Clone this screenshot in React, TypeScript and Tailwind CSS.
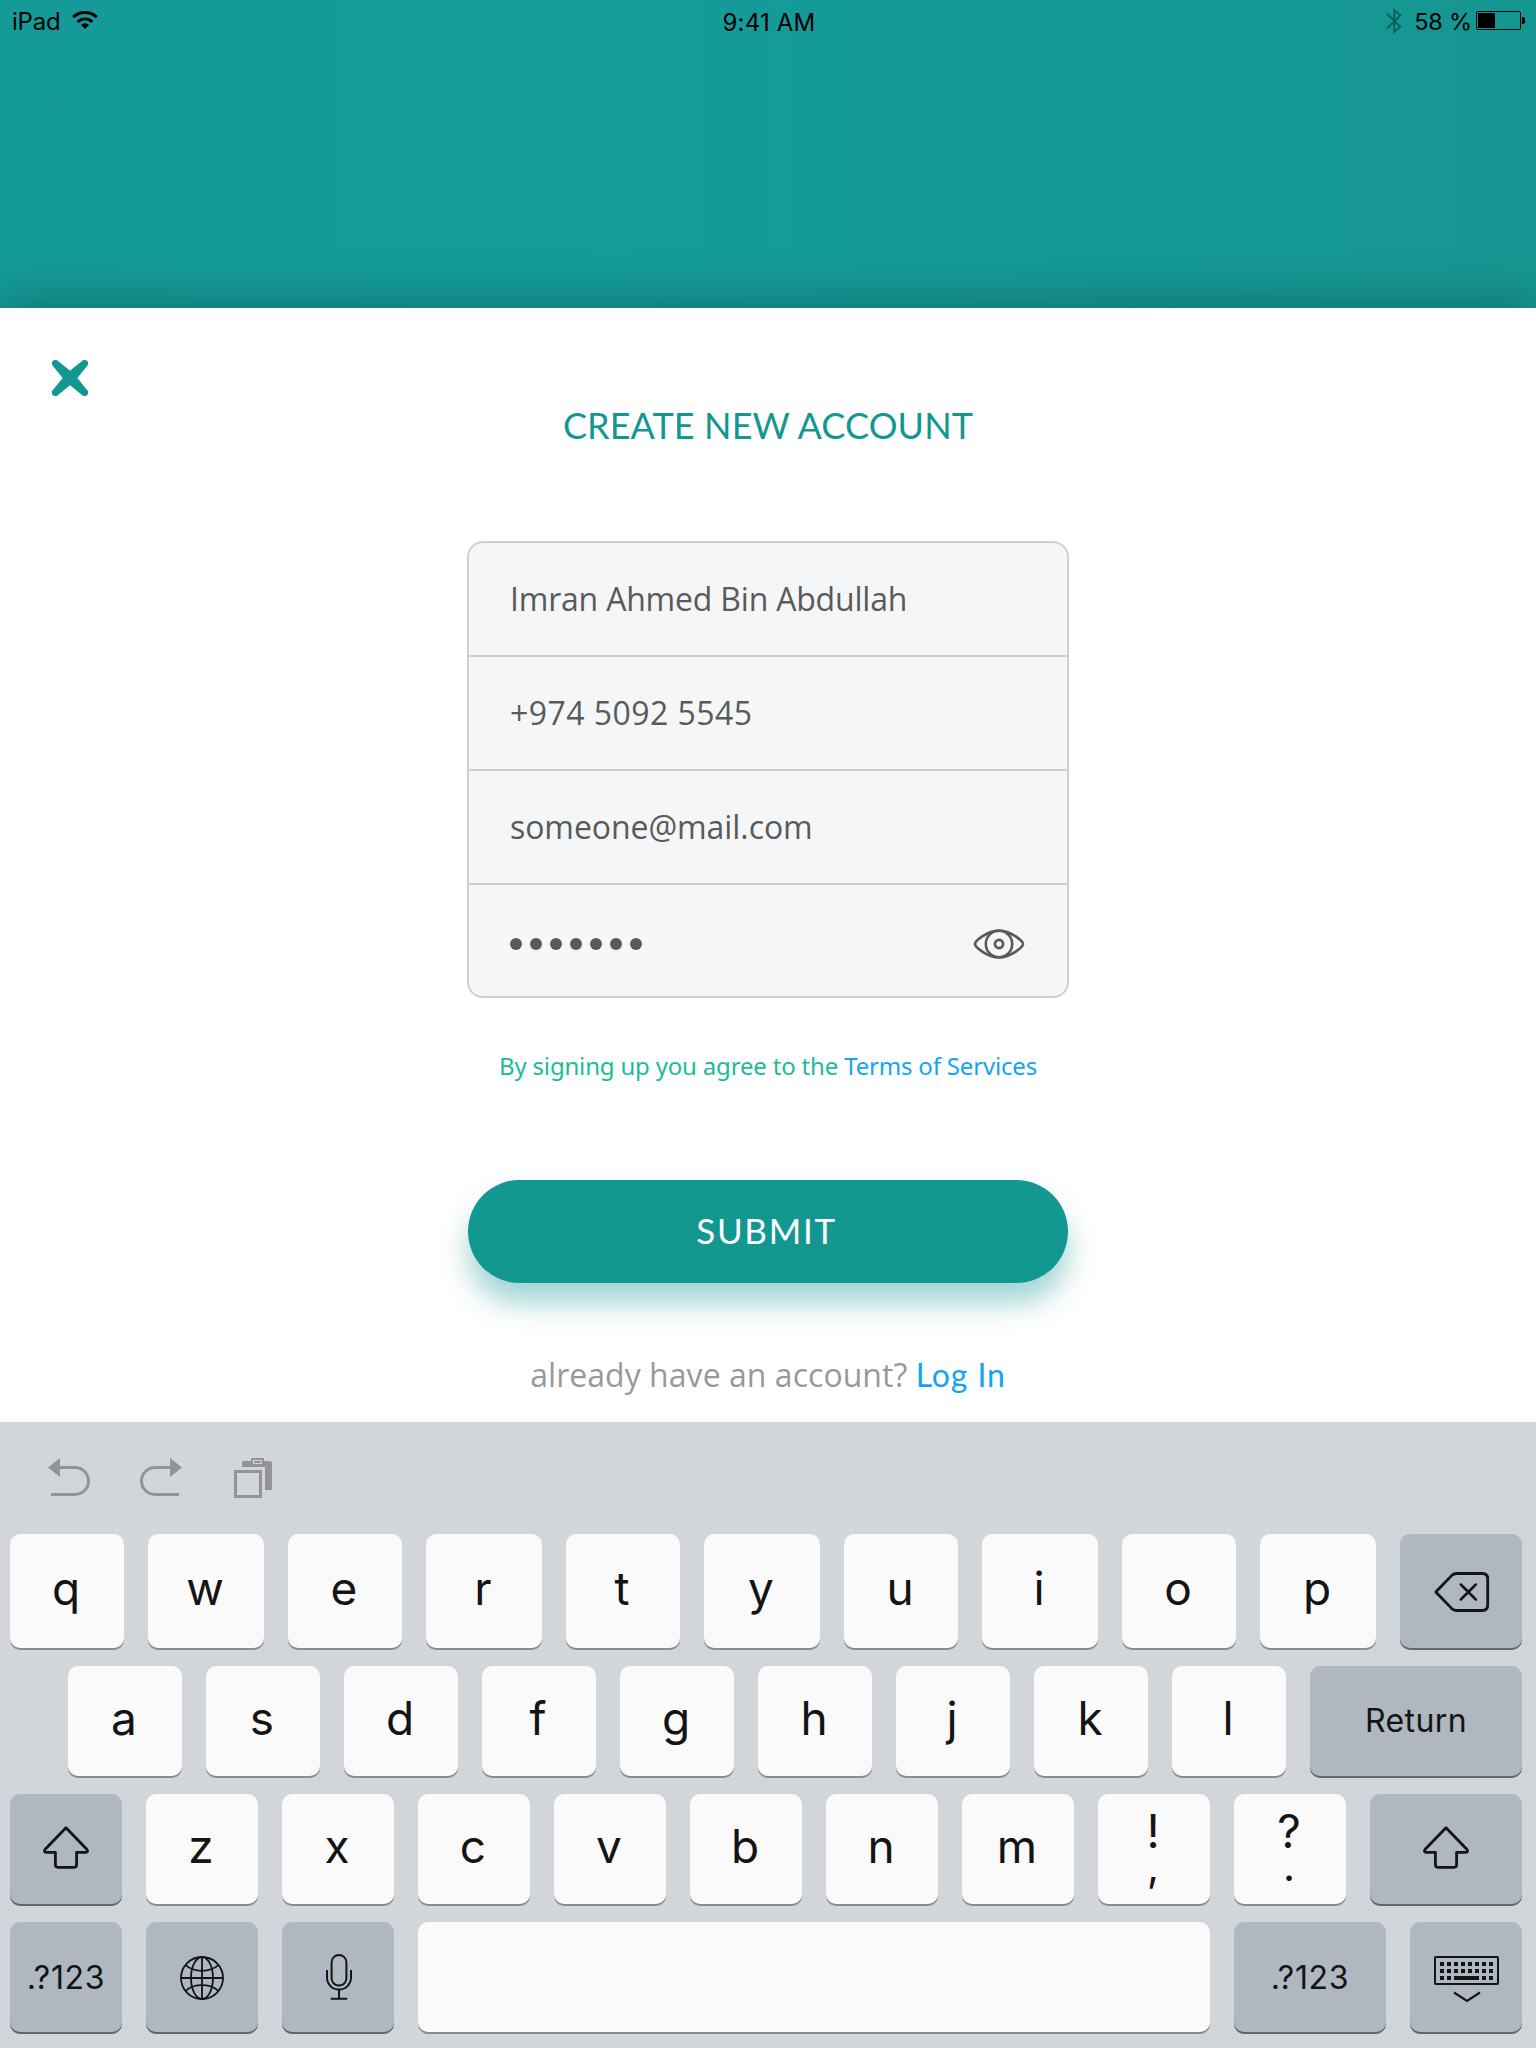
import type { ReactNode } from "react";

function WifiIcon() {
  return (
    <svg width="26" height="18" viewBox="0 0 26 18" className="block">
      <path d="M1.2 6.2 A17 17 0 0 1 24.8 6.2" fill="none" stroke="#000" strokeWidth="3" />
      <path d="M5.6 10.9 A10.6 10.6 0 0 1 20.4 10.9" fill="none" stroke="#000" strokeWidth="2.8" />
      <path d="M13 18 L8.9 13.9 A5.8 5.8 0 0 1 17.1 13.9 Z" fill="#000" />
    </svg>
  );
}

function BluetoothIcon() {
  return (
    <svg width="16" height="26" viewBox="0 0 16 26" className="block">
      <path
        d="M1 5.5 L14.3 18.8 L8.3 24 V2 L14.3 7.2 L1 20.5"
        fill="none"
        stroke="#0c5f5d"
        strokeWidth="1.9"
      />
    </svg>
  );
}

function BatteryIcon() {
  return (
    <div className="flex items-center">
      <div className="h-[19px] w-[45px] rounded-[2px] border border-black p-px">
        <div className="h-full w-[17px] bg-black" />
      </div>
      <div className="ml-px h-[7px] w-[3px] rounded-r-[2px] bg-black" />
    </div>
  );
}

function BackArrow() {
  return (
    <svg width="32" height="32" viewBox="0 0 32 32" className="block opacity-60">
      <path
        d="M17 3 L4 16 L17 29 M4 16 H28"
        fill="none"
        stroke="#149792"
        strokeWidth="6.5"
        strokeLinecap="round"
        strokeLinejoin="round"
      />
    </svg>
  );
}

function CloseIcon() {
  return (
    <svg width="36" height="36" viewBox="0 0 36 36" className="block">
      <path
        d="M18 10.7 L30 .9 A3.6 3.6 0 0 1 35.1 6 L25.4 18 L35.1 30 A3.6 3.6 0 0 1 30 35.1 L18 25.3 L6 35.1 A3.6 3.6 0 0 1 .9 30 L10.7 18 L.9 6 A3.6 3.6 0 0 1 6 .9 Z"
        fill="#139791"
      />
    </svg>
  );
}

function EyeIcon() {
  return (
    <svg width="52" height="30" viewBox="0 0 52 30" className="block" fill="none" stroke="#5a5a5a">
      <path
        d="M1.9 15 C1.9 12.6 13.5 1.6 26 1.6 C38.5 1.6 50.1 12.6 50.1 15 C50.1 17.4 38.5 28.4 26 28.4 C13.5 28.4 1.9 17.4 1.9 15 Z"
        strokeWidth="2.6"
      />
      <circle cx="26" cy="15" r="13.2" strokeWidth="2.6" />
      <circle cx="26" cy="15" r="4.1" strokeWidth="2.7" />
    </svg>
  );
}

function UndoIcon({ flipped = false }: { flipped?: boolean }) {
  return (
    <svg width="42" height="38" viewBox="0 0 42 38" className={flipped ? "block -scale-x-100" : "block"}>
      <path d="M0 9.5 L12 0 V19 Z" fill="#939498" />
      <path d="M11 9.5 H27 A13.5 13.5 0 0 1 27 36.5 H3" fill="none" stroke="#939498" strokeWidth="3" />
    </svg>
  );
}

function PasteIcon() {
  return (
    <svg width="38" height="40" viewBox="0 0 38 40" className="block">
      <path d="M8 9 V4.5 Q8 3 9.5 3 H36 Q38 3 38 5 V30.5 Q38 32 36.5 32 H31 V9 Z" fill="#939498" />
      <rect x="17" y="0" width="13" height="8" fill="#939498" />
      <rect x="19.5" y="2.5" width="8" height="3" fill="none" stroke="#d2d5da" strokeWidth="1" />
      <rect x="1.5" y="13.5" width="25" height="25" fill="none" stroke="#939498" strokeWidth="3" />
    </svg>
  );
}

function DeleteIcon() {
  return (
    <svg
      width="56"
      height="40"
      viewBox="0 0 56 40"
      className="block"
      fill="none"
      stroke="#141414"
      strokeWidth="2.8"
      strokeLinejoin="round"
      strokeLinecap="round"
    >
      <path d="M1.8 20 L17.6 3.6 Q19.8 1.5 22.5 1.5 H48.5 Q53.7 1.5 53.7 6.7 V33.3 Q53.7 38.5 48.5 38.5 H22.5 Q19.8 38.5 17.6 36.4 Z" />
      <path d="M26.8 12.5 L41.8 27.5 M41.8 12.5 L26.8 27.5" strokeWidth="2.5" />
    </svg>
  );
}

function ShiftIcon() {
  return (
    <svg width="46" height="43" viewBox="0 0 46 43" className="block">
      <path
        d="M23 1.7 L2.2 23.2 Q.3 26.3 3.2 26.3 H12.4 V38.4 Q12.4 41.4 15.4 41.4 H30.6 Q33.6 41.4 33.6 38.4 V26.3 H42.8 Q45.7 26.3 43.8 23.2 Z"
        fill="none"
        stroke="#141414"
        strokeWidth="2.8"
        strokeLinejoin="round"
      />
    </svg>
  );
}

function GlobeIcon() {
  return (
    <svg width="44" height="44" viewBox="0 0 44 44" className="block" fill="none" stroke="#141414" strokeWidth="1.8">
      <circle cx="22" cy="22" r="21" />
      <ellipse cx="22" cy="22" rx="11" ry="21" />
      <path d="M22 1 V43 M1 22 H43" />
      <path d="M5.7 9.2 Q12 14.8 22 14.8 Q32 14.8 38.3 9.2" />
      <path d="M5.7 34.8 Q12 29.2 22 29.2 Q32 29.2 38.3 34.8" />
    </svg>
  );
}

function MicIcon() {
  return (
    <svg width="26" height="46" viewBox="0 0 26 46" className="block" fill="none" stroke="#141414" strokeWidth="2">
      <rect x="5.6" y="1" width="14.8" height="30.6" rx="7.4" />
      <path d="M1 16 V23.6 A12 12 0 0 0 25 23.6 V16" />
      <path d="M13 35.8 V44.8 M4.8 44.8 H21.2" />
    </svg>
  );
}

const KEY_COLUMNS = [6, 13, 20, 27, 34, 41, 48, 55];

function HideKeyboardIcon() {
  return (
    <svg width="65" height="47" viewBox="0 0 65 47" className="block" fill="#141414">
      <rect x="1" y="1" width="63" height="27" rx="1" fill="none" stroke="#141414" strokeWidth="2" />
      {KEY_COLUMNS.map((x) => (
        <g key={x}>
          <rect x={x} y="6" width="4" height="4" />
          <rect x={x} y="13" width="4" height="4" />
        </g>
      ))}
      {[6, 13, 48, 55].map((x) => (
        <rect key={x} x={x} y="20" width="4" height="4" />
      ))}
      <rect x="20" y="20" width="25" height="4" />
      <path d="M20 36.5 L33 45 L46 36.5" fill="none" stroke="#141414" strokeWidth="2.2" />
    </svg>
  );
}

function Key({ width, dark = false, children }: { width: string; dark?: boolean; children?: ReactNode }) {
  const tone = dark
    ? "bg-[#afb7c1] shadow-[0_2px_0_#62676d]"
    : "bg-[#fafafa] shadow-[0_2px_0_#8a8b8d]";
  return (
    <button className={`flex h-full shrink-0 items-center justify-center rounded-[10px] ${tone} ${width}`}>
      {children}
    </button>
  );
}

function Letter({ children }: { children: string }) {
  return <span className="pr-[2px] pb-[7px] text-[46px] leading-none">{children}</span>;
}

function StackedKey({ top, bottom }: { top: string; bottom: string }) {
  return (
    <Key width="w-[112px]">
      <span className="flex flex-col items-center pr-[2px] pb-[2px] text-[46px] leading-[32px]">
        <span>{top}</span>
        <span className="pt-[3px] text-[42px]">{bottom}</span>
      </span>
    </Key>
  );
}

function NumbersLabel() {
  return <span className="pt-[2px] text-[32px] leading-none tracking-[0.7px]">.?123</span>;
}

function Keyboard() {
  return (
    <section className="h-[626px] bg-[#d2d5da] font-['Inter',sans-serif] text-[#141414]">
      <div className="flex h-[112px] items-start pt-9 pl-12">
        <UndoIcon />
        <div className="ml-[50px]">
          <UndoIcon flipped />
        </div>
        <div className="ml-[52px]">
          <PasteIcon />
        </div>
      </div>

      <div className="flex h-[114px] gap-6 pl-[10px]">
        {"qwertyuiop".split("").map((c, i) => (
          <Key key={c} width={i % 2 === 0 ? "w-[114px]" : "w-[116px]"}>
            <Letter>{c}</Letter>
          </Key>
        ))}
        <Key width="w-[122px]" dark>
          <span className="pt-[2px] pl-px">
            <DeleteIcon />
          </span>
        </Key>
      </div>

      <div className="mt-[18px] flex h-[110px] gap-6 pl-[68px]">
        {"asdfghjkl".split("").map((c) => (
          <Key key={c} width="w-[114px]">
            <Letter>{c}</Letter>
          </Key>
        ))}
        <Key width="w-[212px]" dark>
          <span className="text-[32px] leading-none tracking-[0.4px]">Return</span>
        </Key>
      </div>

      <div className="mt-[18px] flex h-[110px] gap-6 pl-[10px]">
        <Key width="w-[112px]" dark>
          <span className="pb-[3px]">
            <ShiftIcon />
          </span>
        </Key>
        {"zxcvbnm".split("").map((c) => (
          <Key key={c} width="w-[112px]">
            <Letter>{c}</Letter>
          </Key>
        ))}
        <StackedKey top="!" bottom="," />
        <StackedKey top="?" bottom="." />
        <Key width="w-[152px]" dark>
          <span className="pb-[3px]">
            <ShiftIcon />
          </span>
        </Key>
      </div>

      <div className="mt-[18px] flex h-[110px] gap-6 pl-[10px]">
        <Key width="w-[112px]" dark>
          <NumbersLabel />
        </Key>
        <Key width="w-[112px]" dark>
          <span className="pt-[2px]">
            <GlobeIcon />
          </span>
        </Key>
        <Key width="w-[112px]" dark>
          <span className="pl-[2px]">
            <MicIcon />
          </span>
        </Key>
        <Key width="w-[792px]" />
        <Key width="w-[152px]" dark>
          <NumbersLabel />
        </Key>
        <Key width="w-[112px]" dark>
          <span className="pt-[5px] pl-px">
            <HideKeyboardIcon />
          </span>
        </Key>
      </div>
    </section>
  );
}

function StatusBar() {
  return (
    <div className="grid h-11 grid-cols-3 items-start pt-[7px] font-['Inter',sans-serif] text-2xl leading-[29px] text-black">
      <div className="flex pl-3">
        <span className="tracking-[-0.2px]">iPad</span>
        <span className="mt-1 ml-[11px]">
          <WifiIcon />
        </span>
      </div>
      <div className="mt-px pl-[2px] text-center tracking-[0.2px]">9:41 AM</div>
      <div className="flex justify-end pr-[11px]">
        <span className="mt-px">
          <BluetoothIcon />
        </span>
        <span className="ml-3 text-[23.5px] tracking-[-0.2px]">58 %</span>
        <span className="mt-1 ml-1">
          <BatteryIcon />
        </span>
      </div>
    </div>
  );
}

function Field({ children, last = false }: { children: ReactNode; last?: boolean }) {
  return (
    <div
      className={
        last
          ? "flex h-[111px] items-center justify-between pr-[42px] pl-[41px]"
          : "flex h-[114px] items-center border-b-2 border-[#cdcfd1] pl-[41px]"
      }
    >
      {children}
    </div>
  );
}

function SignUpSheet() {
  return (
    <main className="h-[1114px] bg-white pt-[52px] font-['Open_Sans',sans-serif] shadow-[0_0_50px_rgba(0,0,0,0.3)]">
      <button className="ml-[52px] block">
        <CloseIcon />
      </button>
      <div className="flex flex-col items-center">
        <h1 className="mt-[7px] font-['Lato',sans-serif] text-4xl leading-[44px] tracking-[0.1px] text-[#139791]">
          CREATE NEW ACCOUNT
        </h1>

        <div className="mt-[94px] w-[602px] overflow-hidden rounded-2xl border-2 border-[#cdcfd1] bg-[#f5f6f8] text-[32px] leading-10 text-[#5a5a5a]">
          <Field>
            <span className="tracking-[-0.2px]">Imran Ahmed Bin Abdullah</span>
          </Field>
          <Field>
            <span className="tracking-[0.45px]">+974 5092 5545</span>
          </Field>
          <Field>
            <span className="tracking-[-0.07px]">someone@mail.com</span>
          </Field>
          <Field last>
            <span className="flex gap-2 pt-[7px]">
              {Array.from({ length: 7 }, (_, i) => (
                <span key={i} className="size-3 rounded-full bg-[#5a5a5a]" />
              ))}
            </span>
            <span className="pt-[7px]">
              <EyeIcon />
            </span>
          </Field>
        </div>

        <p className="mt-[53px] font-['Noto_Sans',sans-serif] text-2xl leading-[30px] tracking-[-0.18px] text-[#1abc97]">
          By signing up you agree to the <a className="text-[#12a5f4]">Terms of Services</a>
        </p>

        <button className="mt-[99px] h-[103px] w-[600px] rounded-full bg-[#139791] pr-[3px] pb-[2px] font-['Lato',sans-serif] text-[35px] tracking-[1.7px] text-white shadow-[0_20px_28px_rgba(19,151,145,0.4)]">
          SUBMIT
        </button>

        <p className="mt-[72px] text-[32px] leading-10 tracking-[0.04px] text-[#98999a]">
          already have an account?{" "}
          <a className="font-['Lato',sans-serif] tracking-[0.9px] text-[#12a5f4]">Log In</a>
        </p>
      </div>
    </main>
  );
}

export default function App() {
  return (
    <div className="h-[2048px] w-[1536px] overflow-hidden bg-white">
      <header className="h-[308px] bg-linear-to-r from-[#149a97] via-[#149c9b] via-35% to-[#169692]">
        <StatusBar />
        <div className="pt-[44px] pl-10">
          <BackArrow />
        </div>
      </header>
      <SignUpSheet />
      <div className="relative">
        <Keyboard />
      </div>
    </div>
  );
}
